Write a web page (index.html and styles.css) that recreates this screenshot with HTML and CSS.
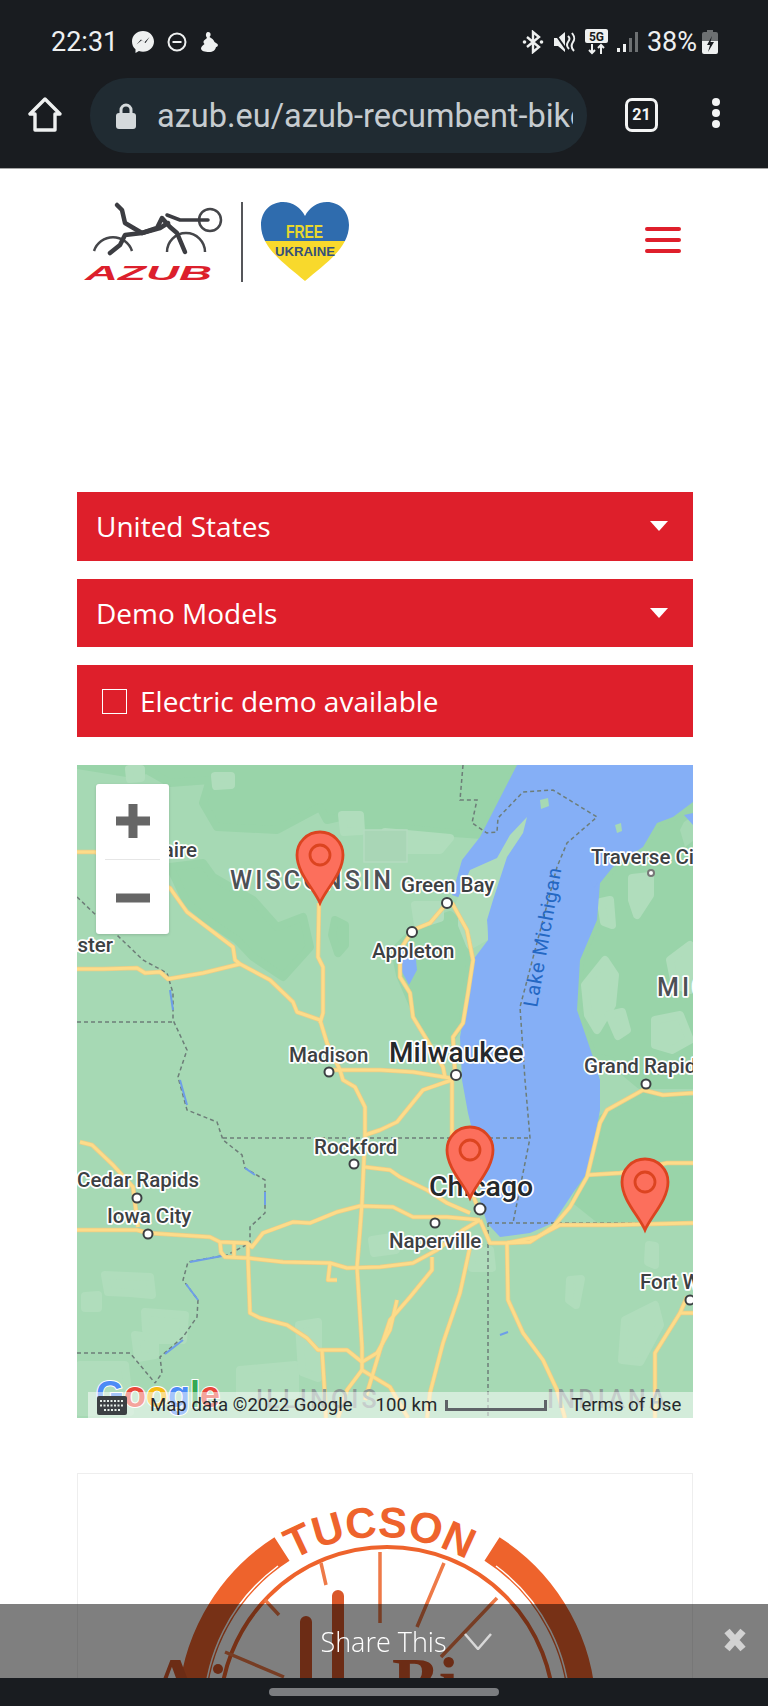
FILE: index.html
```html
<!DOCTYPE html>
<html lang="en">
<head>
  <meta charset="UTF-8">
  <meta name="viewport" content="width=device-width, initial-scale=1.0">
  <title>AZUB - Demo Models</title>
  <link rel="stylesheet" href="styles.css">
</head>
<body>

  <!-- Barra di stato del telefono -->
  <div class="status-bar">
    <div class="status-left">
      <span class="clock">22:31</span>
      <svg class="ico" width="24" height="24" viewBox="0 0 24 24"><path class="fill-w" d="M12 1C5.800 1 1 5.500 1 11.500c0 3.200 1.300 5.900 3.500 7.800V23l3.400-1.900c1.300.4 2.700.6 4.100.6 6.200 0 11-4.500 11-10.200S18.200 1 12 1z"/><path class="zig" d="M5.500 14.500l4.500-5 3.500 2.800 5-5.300-4 6-3.800-2.700z"/></svg>
      <svg class="ico" width="20" height="20" viewBox="0 0 20 20"><circle class="line-w" cx="10" cy="10" r="8.500"/><path class="line-w" d="M5.500 10h9"/></svg>
      <svg class="ico" width="20" height="22" viewBox="0 0 20 22"><path class="fill-w" d="M9 1c2 0 3 1.500 2.500 3.500l-1 1.500c3 1.500 4 3 5 5l3 2c1 1.500 0 3-1.500 3-.5 3-3 5-7 5-4 0-8-1-8-3.500 0-2 2-3 3.500-4.500-1-1-1.500-2-.5-3.500L8 7 7 5c-.5-2 .5-4 2-4z"/></svg>
    </div>
    <div class="status-right">
      <svg class="ico" width="22" height="24" viewBox="0 0 22 24"><path class="line-w thick" d="M5 7l12 10-6 5V2l6 5L5 17"/><circle class="fill-w" cx="2.500" cy="12" r="1.800"/><circle class="fill-w" cx="19.500" cy="12" r="1.800"/></svg>
      <svg class="ico" width="23" height="24" viewBox="0 0 23 24"><path class="fill-w" d="M1 8h4l7-6v20l-7-6H1z"/><path class="line-w" d="M15 6c2 2 2 3 0 6s-1 5 1 7M19 3c3 4 3 6 1 9s-2 6 1 9"/><path class="slash" d="M1 2l14 20"/></svg>
      <svg class="ico" width="23" height="26" viewBox="0 0 23 26"><rect class="fill-w" x="0" y="0" width="23" height="14" rx="2"/><text class="five-g" x="11.500" y="12">5G</text><path class="line-w" d="M7 15v9M4 21l3 3 3-3M16 25v-9M13 19l3-3 3 3"/></svg>
      <svg class="ico" width="21" height="24" viewBox="0 0 21 24"><rect class="fill-w" x="0" y="18" width="3" height="4"/><rect class="fill-w" x="6" y="14" width="3" height="8"/><rect class="fill-d" x="12" y="8" width="3" height="14"/><rect class="fill-d" x="18" y="2" width="3" height="20"/></svg>
      <span class="battery-pct">38%</span>
      <svg class="ico" width="16" height="24" viewBox="0 0 16 24"><path class="fill-d" d="M5 0h6v2h3a2 2 0 0 1 2 2v8H0V4a2 2 0 0 1 2-2h3z"/><path class="fill-w" d="M0 11h16v11a2 2 0 0 1-2 2H2a2 2 0 0 1-2-2z"/><path class="bolt" d="M10 6l-5 9h3l-2 7 6-10H8.500z"/></svg>
    </div>
  </div>

  <!-- Barra del browser -->
  <div class="browser-bar">
    <svg class="home-ico" width="36" height="36" viewBox="0 0 36 36"><path class="line-w home" d="M18 2L3 17h5v16h20V17h5z"/></svg>
    <div class="url-pill">
      <svg width="20" height="26" viewBox="0 0 20 26"><path class="lock-line" d="M5 11V7a5 5 0 0 1 10 0v4"/><rect class="lock" x="0" y="10" width="20" height="16" rx="3"/></svg>
      <span class="url-text">azub.eu/azub-recumbent-bikes/dealers</span>
    </div>
    <div class="tabs-count">21</div>
    <div class="menu-dots"><i></i><i></i><i></i></div>
  </div>

  <header class="site-header">
    <svg class="logo" width="275" height="84" viewBox="80 200 275 84">
      <defs>
        <linearGradient id="flag" x1="0" y1="0" x2="0" y2="1">
          <stop offset="0.5" stop-color="#2f6cae"/>
          <stop offset="0.5" stop-color="#f8d92c"/>
        </linearGradient>
      </defs>
      <path class="wheel" d="M94 251a20 20 0 0 1 38 0M167 252a19 19 0 0 1 38 0"/>
      <circle class="wheel" cx="210" cy="220" r="11"/>
      <path class="frame" d="M117 205l5 5 3 13 17 10 15-5 5-10 8 9 7 6 8 19"/>
      <path class="frame" d="M110 253l10-8 5-10 17-2 18-5 8-5"/>
      <path class="frame thin" d="M167 215l13 5h28"/>
      <text class="azub" x="85" y="280" textLength="127" lengthAdjust="spacingAndGlyphs">AZUB</text>
      <rect class="logo-rule" x="241" y="202" width="2" height="80"/>
      <path class="heart" d="M305 281C285 264 261 248 261 225c0-14 10-23 22-23 10 0 18 6 22 14 4-8 12-14 22-14 12 0 22 9 22 23 0 23-24 39-44 56z"/>
      <text class="free" x="286" y="238" textLength="37" lengthAdjust="spacingAndGlyphs">FREE</text>
      <text class="ukraine" x="275" y="256" textLength="60" lengthAdjust="spacingAndGlyphs">UKRAINE</text>
    </svg>
    <div class="burger"><i></i><i></i><i></i></div>
  </header>

  <main class="content">
    <div class="red-bar">
      <span>United States</span>
      <b class="caret"></b>
    </div>
    <div class="red-bar">
      <span>Demo Models</span>
      <b class="caret"></b>
    </div>
    <div class="red-bar check-bar">
      <b class="checkbox"></b>
      <span>Electric demo available</span>
    </div>

    <!-- Mappa -->
    <div class="map">
      <svg class="map-svg" width="616" height="653" viewBox="77 765 616 653">
        <defs>
          <g id="roads">
            <path d="M77 852L95 852 170 888 187 912 233 947 235 960 240 964 270 980 293 1002 297 1012 320 1020 327 1043 340 1070"/>
            <path d="M77 969L103 969 137 968 145 973 160 972 168 979 203 973 240 964"/>
            <path d="M319 903L318 957 323 967 323 1013 320 1023"/>
            <path d="M329 1070L380 1070 413 1072 450 1078"/>
            <path d="M455 1073L453 1037 463 1023 468 993 473 960 467 930 452 903"/>
            <path d="M447 903L430 923 413 930 400 950 400 977 410 993 413 1017 427 1040 443 1067 445 1077"/>
            <path d="M340 1070L343 1080 355 1087 365 1107 365 1137 362 1203 360 1230 357 1267 362 1347 362 1370"/>
            <path d="M80 1142L92 1145 113 1165 133 1187 138 1227"/>
            <path d="M77 1230L137 1230 148 1233 210 1237 220 1242 247 1243 252 1247 263 1233 293 1222 310 1223 337 1212 360 1206 393 1207 413 1217 447 1217 480 1220"/>
            <path d="M220 1242L221 1252 225 1257 248 1258 283 1262 330 1263 347 1268 380 1267 413 1263 437 1250 463 1230 480 1220"/>
            <path d="M234 1243V1256M248 1243V1258L250 1313 260 1318 287 1325 307 1338 318 1350 347 1350 362 1362 377 1353 390 1330 397 1300"/>
            <path d="M322 1350L325 1397 326 1418"/>
            <path d="M362 1370L347 1390 338 1418M362 1370L390 1387 408 1418"/>
            <path d="M330 1263L328 1280H337"/>
            <path d="M365 1167L390 1170 400 1177 427 1190 447 1203 470 1213"/>
            <path d="M365 1135L380 1130 397 1122 423 1090 443 1083 452 1080V1143L480 1213"/>
            <path d="M432 1257V1270L410 1297 390 1320 380 1350 365 1400"/>
            <path d="M470 1247L460 1293 443 1343 430 1393 427 1418"/>
            <path d="M480 1220L490 1243 507 1243 530 1242 553 1227 570 1207 587 1177 600 1123 607 1110 643 1090 663 1095 693 1093"/>
            <path d="M587 1175L620 1173 667 1163 693 1163"/>
            <path d="M507 1243L537 1237 560 1225 613 1225 693 1223"/>
            <path d="M507 1243L508 1300 523 1333 543 1360 557 1390 565 1418"/>
            <path d="M693 1313H680L687 1297M680 1313L655 1353V1418"/>
          </g>
        </defs>

        <rect class="land" x="77" y="765" width="616" height="653"/>
        <path class="land-dark" d="M77 765H517L482 835 440 832 400 828 363 830 340 817 327 820 320 807 277 830 217 827 203 803 210 780 170 783 147 770 127 773z"/>
        <path class="land-dark" d="M170 867L203 863 213 877 253 900 277 927 303 917 310 947 283 977 253 957 237 940 207 920 187 903z"/>
        <path class="land-dark" d="M335 920L345 925 345 945 338 953 332 935z"/>
        <path class="land-dark" d="M420 925L450 915 462 925 470 960 463 1020 450 1040 430 1040 415 1010 400 975 395 950z"/>
        <path class="land-dark" d="M600 883L613 867 643 847 657 823 673 817 693 802V1085H640L610 1060 593 1057 577 1010 580 960 597 920z"/>
        <path class="land-dark" d="M600 1120L640 1095 693 1100V1220H600L575 1200 590 1170z"/>
        <path class="land-light" d="M585 985L605 960 615 975 612 1005 597 1030 588 1015z"/>
        <path class="land-light" d="M609 1015L622 1012 627 1030 618 1036z"/>
        <path class="land-light" d="M601 902L610 900 612 925 604 922z"/>
        <path class="land-light" d="M632 878L650 876 650 895 637 915 632 900z"/>
        <path class="land-light" d="M655 1020L680 1015 690 1040 672 1050 655 1045z"/>
        <path class="land-light" d="M670 960L690 945V990L675 985z"/>
        <path class="land-light" d="M570 1280L581 1279 576 1305 569 1300z"/>
        <path class="land-light" d="M625 1320L655 1305 660 1325 640 1362 622 1360z"/>
        <path class="land-light" d="M649 1245L655 1246 655 1265 648 1262z"/>
        <path class="land-light" d="M85 1296L98 1295 98 1308 85 1308z"/>
        <path class="land-light" d="M105 1275L150 1277 152 1295 130 1293 108 1292z"/>
        <path class="land-light" d="M145 1312L185 1315 183 1340 160 1340 146 1330z"/>
        <path class="land-light" d="M135 1335L155 1338 155 1355 138 1358z"/>
        <path class="land-light" d="M80 1365L125 1365 130 1412H80z"/>
        <path class="land-light" d="M240 1370L295 1365 295 1395 240 1395z"/>
        <path class="land-light" d="M299 1325L318 1322 318 1378 302 1372z"/>
        <path class="land-light" d="M372 1240L398 1236 396 1250 374 1253z"/>
        <path class="land-light" d="M470 1255L490 1250 492 1268 472 1268z"/>
        <path class="land-light" d="M415 905L440 905 440 918 418 925z"/>
        <path class="land-light" d="M462 900L487 905 487 935 470 945 462 925z"/>
        <path class="land-light" d="M385 832L450 838 440 850 400 850 385 848z"/>
        <path class="land-light" d="M129 769L141 769 141 778 130 779z"/>
        <path class="land-light" d="M215 776L231 776 231 785 216 786z"/>
        <path class="land-light" d="M342 815L360 815 361 831 344 832z"/>
        <path class="land-square" d="M364 830H407V862H364z"/>

        <path class="water" d="M517 765L480 837 462 860 452 895 466 900 487 920 488 940 473 960 468 993 460 1037 462 1080 468 1113 482 1170 480 1200 487 1223 500 1237 530 1233 553 1223 573 1193 587 1173 593 1147 600 1110 600 1080 593 1057 577 1010 580 960 597 920 600 883 613 867 643 847 657 823 673 817 693 802V765z"/>
        <path class="land-pale" d="M527 817L523 833 507 857 493 900 487 920 488 940 470 950 455 905 470 870 497 858 510 835z"/>
        <path class="land" d="M680 830L684 822 693 816V841L685 847zM540 800L548 798 549 806 541 809zM615 825L621 823 622 831 617 833z"/>
        <path class="water" d="M684 815L693 813V825zM400 950H415L417 970 409 985 401 970zM590 880L598 882 594 888z"/>

        <path class="border" d="M463 765L460 800H477L472 823 487 833 497 832 498 818 523 792 553 790 597 817 567 843 557 867 520 1007 525 1080 530 1138 513 1223"/>
        <path class="border" d="M223 1138H530"/>
        <path class="border" d="M77 1022H173"/>
        <path class="border" d="M77 1353H130L155 1383"/>
        <path class="border" d="M488 1223V1418M488 1223H693"/>
        <path class="border" d="M77 897L120 938 143 960 167 973 173 993V1020L187 1050 178 1077 187 1110 217 1122 223 1140 242 1155 245 1168 265 1180V1213L250 1227V1243L227 1255 188 1262 183 1280 198 1300 197 1317 183 1337 160 1357 162 1373 155 1383"/>
        <path class="river" d="M170 990L173 1010M180 1080L187 1105M245 1168L255 1175M265 1192V1205M190 1262L222 1256M186 1284L198 1300M165 1354L183 1340M500 1335L508 1332"/>

        <use href="#roads" class="road-casing"/>
        <use href="#roads" class="road"/>

        <circle class="dot" cx="329" cy="1072" r="4.500"/>
        <circle class="dot" cx="447" cy="903" r="5"/>
        <circle class="dot" cx="412" cy="932" r="5"/>
        <circle class="dot" cx="456" cy="1075" r="5"/>
        <circle class="dot" cx="354" cy="1164" r="4.500"/>
        <circle class="dot" cx="137" cy="1198" r="4.500"/>
        <circle class="dot" cx="148" cy="1234" r="4.500"/>
        <circle class="dot" cx="480" cy="1209" r="5.500"/>
        <circle class="dot" cx="435" cy="1223" r="4.500"/>
        <circle class="dot" cx="690" cy="1300" r="4.500"/>
        <circle class="dot" cx="646" cy="1084" r="4.500"/>
        <circle class="dot small" cx="651" cy="873" r="3"/>

        <text class="lbl" x="197" y="857" text-anchor="end">Eau Claire</text>
        <text class="lbl" x="113" y="952" text-anchor="end">Rochester</text>
        <text class="lbl state" x="230" y="889">WISCONSIN</text>
        <text class="lbl state" x="657" y="996">MICHIGAN</text>
        <text class="lbl" x="401" y="892">Green Bay</text>
        <text class="lbl" x="372" y="958">Appleton</text>
        <text class="lbl" x="591" y="864">Traverse City</text>
        <text class="lbl" x="584" y="1073">Grand Rapids</text>
        <text class="lbl big" x="389" y="1062">Milwaukee</text>
        <text class="lbl" x="289" y="1062">Madison</text>
        <text class="lbl" x="314" y="1154">Rockford</text>
        <text class="lbl" x="77" y="1187">Cedar Rapids</text>
        <text class="lbl" x="107" y="1223">Iowa City</text>
        <text class="lbl chicago" x="429" y="1196">Chicago</text>
        <text class="lbl" x="389" y="1248">Naperville</text>
        <text class="lbl" x="640" y="1289">Fort Wayne</text>
        <text class="lake" transform="translate(537 1008) rotate(-80)">Lake Michigan</text>
        <text class="lbl state faded" x="256" y="1408">ILLINOIS</text>
        <text class="lbl state faded" x="547" y="1408">INDIANA</text>
        <text class="google" x="96" y="1407"><tspan class="g-b">G</tspan><tspan class="g-r">o</tspan><tspan class="g-y">o</tspan><tspan class="g-b">g</tspan><tspan class="g-g">l</tspan><tspan class="g-r">e</tspan></text>

        <g transform="translate(320 903)"><path class="pin" d="M0 0C-6-14-23-30-23-48A23 23 0 1 1 23-48C23-30 6-14 0 0z"/><circle class="pin" cx="0" cy="-48" r="10"/></g>
        <g transform="translate(470 1198)"><path class="pin" d="M0 0C-6-14-23-30-23-48A23 23 0 1 1 23-48C23-30 6-14 0 0z"/><circle class="pin" cx="0" cy="-48" r="10"/></g>
        <g transform="translate(645 1230)"><path class="pin" d="M0 0C-6-14-23-30-23-48A23 23 0 1 1 23-48C23-30 6-14 0 0z"/><circle class="pin" cx="0" cy="-48" r="10"/></g>
      </svg>

      <div class="zoom-ctrl">
        <svg width="73" height="75" viewBox="0 0 73 75"><path class="zoom-mark" d="M20 37h34M37 20v34"/></svg>
        <hr>
        <svg width="73" height="75" viewBox="0 0 73 75"><path class="zoom-mark" d="M20 38h34"/></svg>
      </div>

      <div class="map-foot">
        <svg class="kbd" width="30" height="19" viewBox="0 0 30 19"><rect width="30" height="19" rx="2"/><path class="keys" d="M3 5h24M3 9.500h24M7 14h16"/></svg>
        <span class="foot-data">Map data ©2022 Google</span>
        <span class="foot-km">100 km</span>
        <b class="scale"></b>
        <span class="foot-terms">Terms of Use</span>
      </div>
    </div>

    <!-- Scheda rivenditore -->
    <div class="dealer-card">
      <svg width="614" height="240" viewBox="78 1474 614 240">
        <defs>
          <path id="tucsonArc" d="M203 1714A177 177 0 0 1 557 1714"/>
        </defs>
        <path class="ring" d="M282 1549A195 195 0 0 0 192 1714M492 1549A195 195 0 0 1 582 1714"/>
        <path class="ring-cut" d="M278 1566A183 183 0 0 0 204 1714M496 1566A183 183 0 0 1 570 1714"/>
        <circle class="ring-in" cx="387" cy="1714" r="167"/>
        <path class="spoke" d="M380 1552v71M444 1563l-27 64M321 1563l5 22M497 1598l-56 59M265 1600l14 15M225 1652l59 25"/>
        <path class="bold-spoke" d="M338 1596v90M306 1622v70"/>
        <text class="tucson"><textPath href="#tucsonArc" startOffset="50%">TUCSON</textPath></text>
        <text class="bike-txt" x="392" y="1706">Bi</text>
        <text class="bike-txt" x="150" y="1706">A</text>
        <circle class="bike-dot" cx="218" cy="1669" r="5"/>
      </svg>
    </div>
  </main>

  <div class="share-bar">
    <span class="share-txt">Share This</span>
    <svg width="28" height="17" viewBox="0 0 28 17"><path class="chev" d="M1 1l13 15L27 1"/></svg>
    <svg class="share-close" width="24" height="24" viewBox="0 0 24 24"><path class="x-mark" d="M4 3l16 18M20 3L4 21"/></svg>
  </div>
  <div class="nav-bar"><i></i></div>

</body>
</html>
```

FILE: styles.css
```css
* { box-sizing: border-box; }
html, body { margin: 0; height: 1706px; overflow: hidden; background: #fff; }
body { font-family: "Open Sans", sans-serif; }

/* status bar */
.status-bar {
  height: 72px; background: #191c20; color: #eef0f0;
  display: flex; align-items: center; justify-content: space-between;
  padding: 12px 50px 0 51px;
  font-family: Roboto, sans-serif;
}
.status-left, .status-right { display: flex; align-items: center; }
.status-left { gap: 12px; }
.status-right { gap: 9px; }
.clock { font-size: 27px; margin-right: 1px; }
.battery-pct { font-size: 27px; margin-left: 0; margin-right: -4px; }
.ico { display: block; }
.fill-w { fill: #eef0f0; }
.fill-d { fill: #6d7072; }
.line-w { fill: none; stroke: #eef0f0; stroke-width: 2; }
.line-w.thick { stroke-width: 2.4; }
.zig { fill: #191c20; }
.slash { stroke: #191c20; stroke-width: 2; }
.five-g { font: 700 12px Roboto, sans-serif; fill: #191c20; text-anchor: middle; }
.bolt { fill: #191c20; }

/* browser bar */
.browser-bar {
  height: 97px; background: #191c20; border-bottom: 1px solid #a5a5a5;
  display: flex; align-items: flex-start;
  padding: 6px 0 0 27px;
}
.home-ico { margin-top: 19px; }
.home { stroke-width: 3.4; stroke-linejoin: round; }
.url-pill {
  width: 497px; height: 75px; margin-left: 27px; background: #202b32;
  border-radius: 37px; display: flex; align-items: center;
  padding: 0 14px 0 26px; overflow: hidden;
}
.lock { fill: #d4d9db; }
.lock-line { fill: none; stroke: #d4d9db; stroke-width: 3; }
.url-text {
  font: 32.500px Roboto, sans-serif; color: #c6ccd0; margin-left: 21px;
  white-space: nowrap; overflow: hidden; flex: 1;
}
.tabs-count {
  width: 33px; height: 34px; margin: 20px 0 0 38px;
  border: 3px solid #f3f4f4; border-radius: 7px; color: #f3f4f4;
  font: 700 16px/28px Roboto, sans-serif; text-align: center;
}
.menu-dots { display: flex; flex-direction: column; gap: 3px; margin: 20px 0 0 54px; }
.menu-dots i { width: 8px; height: 8px; border-radius: 50%; background: #f3f4f4; }

/* header */
.site-header {
  height: 323px; display: flex; justify-content: space-between; align-items: flex-start;
  padding: 31px 87px 0 80px;
}
.logo { display: block; }
.wheel { fill: none; stroke: #45464a; stroke-width: 2.500; }
.frame { fill: none; stroke: #3c3d42; stroke-width: 4.500; stroke-linejoin: round; stroke-linecap: round; }
.frame.thin { stroke-width: 3.500; }
.azub { font: italic 700 21px "Liberation Sans", sans-serif; fill: #dc1f2c; }
.logo-rule { fill: #55565a; }
.heart { fill: url(#flag); }
.free { font: 700 18px "Liberation Sans", sans-serif; fill: #e8d82c; }
.ukraine { font: 700 13px "Liberation Sans", sans-serif; fill: #35507a; }
.burger { display: flex; flex-direction: column; gap: 7px; margin-top: 27px; }
.burger i { display: block; width: 36px; height: 4px; border-radius: 2px; background: #df1f2b; }

/* filters */
.content { padding: 0 75px 0 77px; }
.red-bar {
  height: 68.500px; margin-bottom: 18px; background: #de1f2b; color: #fff;
  display: flex; align-items: center; justify-content: space-between;
  padding: 0 25px 0 19px; font-size: 28px;
}
.check-bar { height: 72px; margin-bottom: 28px; justify-content: flex-start; gap: 13px; padding: 0 25px; }
.caret { width: 0; height: 0; border: 9px solid transparent; border-top: 10px solid #fff; border-bottom: 0; }
.checkbox { width: 25px; height: 25px; border: 1.500px solid #fff; }

/* map */
.map { position: relative; width: 616px; height: 653px; overflow: hidden; }
.map-svg { display: block; }
.land { fill: #a6d9b4; }
.land-dark { fill: #99d4a9; stroke: #99d4a9; stroke-width: 8; stroke-linejoin: round; }
.land-light { fill: #b0ddbc; stroke: #b0ddbc; stroke-width: 8; stroke-linejoin: round; }
.land-pale { fill: #aedcb9; }
.land-square { fill: #a9d6b6; stroke: #b4dcc0; stroke-width: 1.500; }
.water { fill: #85aff6; }
.border { fill: none; stroke: #6d7d78; stroke-width: 1.500; stroke-dasharray: 4 3; }
.river { fill: none; stroke: #6d9ee8; stroke-width: 2; }
.road-casing { fill: none; stroke: #eccd85; stroke-width: 4.500; stroke-linejoin: round; }
.road { fill: none; stroke: #fddc8a; stroke-width: 3; stroke-linejoin: round; }
.dot { fill: #fff; stroke: #3c4043; stroke-width: 2; }
.dot.small { stroke: #777; }
.lbl {
  font: 500 20.500px Roboto, sans-serif; fill: #3c4043;
  stroke: #fff; stroke-width: 3.500px; paint-order: stroke; stroke-linejoin: round;
}
.lbl.big { font-size: 28px; fill: #25282b; }
.lbl.chicago { font-size: 28.500px; fill: #25282b; }
.lbl.state { font-size: 25px; letter-spacing: 3.200px; fill: #4d5156; }
.lbl.faded { fill: #8b9a96; stroke: none; }
.lake { font: 20px Roboto, sans-serif; letter-spacing: 1px; fill: #2468c4; }
.google { font: 700 36px "Liberation Sans", sans-serif; stroke: #fff; stroke-width: 2px; paint-order: stroke; }
.g-b { fill: #4c8bf5; }
.g-r { fill: #e8483a; }
.g-y { fill: #f6bb12; }
.g-g { fill: #34a853; }
.pin { fill: #fc6f5c; stroke: #dc4420; stroke-width: 2.800; }

.zoom-ctrl {
  position: absolute; left: 19px; top: 19px; width: 73px; height: 150px;
  background: #fff; border-radius: 3px; box-shadow: 0 1px 3px rgba(0, 0, 0, 0.15);
}
.zoom-ctrl svg { display: block; }
.zoom-ctrl hr { margin: 0 9px; border: 0; border-top: 1.500px solid #e6e6e6; height: 0; }
.zoom-mark { fill: none; stroke: #666; stroke-width: 9; }

.map-foot {
  position: absolute; left: 11px; right: 0; bottom: 0; height: 26px;
  background: rgba(255, 255, 255, 0.5); color: #26292c;
  font: 18.600px/26px Roboto, sans-serif;
  display: flex; align-items: center; white-space: nowrap;
}
.kbd { margin-left: 9px; fill: #3c4043; }
.keys { stroke: #e5eee8; stroke-width: 2; stroke-dasharray: 2 1.500; }
.foot-data { margin-left: 23px; }
.foot-km { margin-left: 23px; }
.scale { width: 102px; height: 11px; margin-left: 8px; border: 3px solid #5f6368; border-top: 0; }
.foot-terms { margin-left: 24px; }

/* dealer card */
.dealer-card { margin-top: 55px; height: 300px; border: 1px solid #eeeeee; }
.dealer-card svg { display: block; }
.ring { fill: none; stroke: #ee632c; stroke-width: 28; }
.ring-cut { fill: none; stroke: #fff; stroke-width: 1.500; }
.ring-in { fill: none; stroke: #ee632c; stroke-width: 4; }
.spoke { fill: none; stroke: #ee7a48; stroke-width: 3.500; }
.bold-spoke { fill: none; stroke: #d9582a; stroke-width: 12; stroke-linecap: round; }
.tucson { font: 700 43px "Liberation Sans", sans-serif; fill: #ee632c; text-anchor: middle; }
.bike-txt { font: 700 70px "Liberation Serif", serif; fill: #d9582a; }
.bike-dot { fill: #d9582a; }

/* bottom bars */
.share-bar {
  position: fixed; left: 0; right: 0; top: 1604px; height: 74px;
  background: rgba(0, 0, 0, 0.5); color: #fff;
  display: flex; align-items: center; justify-content: center; gap: 17px;
  padding-left: 44px;
}
.share-txt { font-size: 27px; font-weight: 300; }
.chev { fill: none; stroke: #d8d8d8; stroke-width: 2.500; }
.share-close { position: absolute; right: 21px; top: 24px; }
.x-mark { fill: none; stroke: #d2d2d2; stroke-width: 7; }
.nav-bar {
  position: fixed; left: 0; right: 0; top: 1678px; height: 28px; background: #191c20;
  display: flex; justify-content: center; padding-top: 10px;
}
.nav-bar i { display: block; width: 230px; height: 8px; border-radius: 4px; background: #7b7d80; }
```
